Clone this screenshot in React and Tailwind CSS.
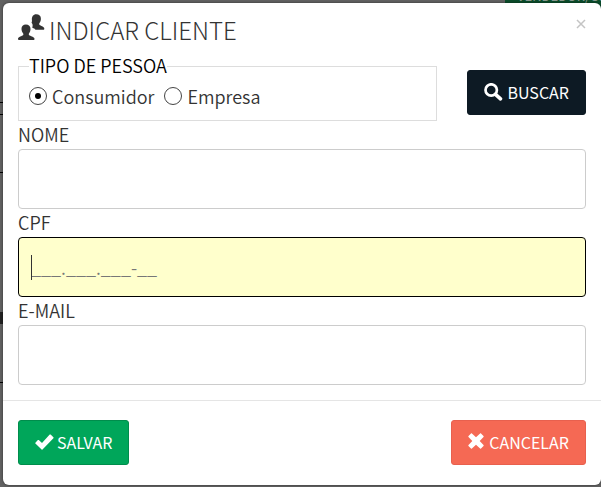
import { useState } from 'react';

function UsersIcon() {
  return (
    <svg width="27" height="27" viewBox="0 0 27 27" fill="currentColor" aria-hidden="true">
      <path d="M7.900 10.500c2.900 0 4.700 1.700 4.600 4.500 0 1.500-.4 3-1.400 4.200-.5.700-.4 1.500.1 2 .9.800 5.100 1.300 5.300 3.600.1.900-.3 1.200-1 1.200H1c-.8 0-1.100-.4-1-1.200.2-2.300 4.200-2.800 5-3.600.5-.5.500-1.300 0-2-1-1.200-1.500-2.700-1.500-4.200-.1-2.800 1.500-4.500 4.400-4.500z" />
      <path d="M18.200.3c2.900 0 4.800 1.700 4.700 4.500 0 1.500-.4 3-1.400 4.200-.5.700-.4 1.500.1 2 .9.800 4.500 1.300 4.700 3.500.1.900-.3 1.200-1 1.200h-7.800c-.5-.9-1.600-1.500-3.200-2 .9-3.200-.1-4.100-.8-4.900.4-.7.600-1.500.4-2.700-.3-3.600 1.400-5.800 4.300-5.800z" />
    </svg>
  );
}

function SearchIcon() {
  return (
    <svg width="19" height="18" viewBox="0 0 19 18" fill="none" stroke="currentColor" aria-hidden="true">
      <circle cx="7.200" cy="7" r="5.700" strokeWidth="2.700" />
      <path d="M11.500 11.300L16.500 15.800" strokeWidth="3.600" strokeLinecap="round" />
    </svg>
  );
}

function CheckIcon() {
  return (
    <svg width="19" height="16" viewBox="0 0 19 16" fill="currentColor" aria-hidden="true">
      <path d="M.4 8.700l2.500-2.600c.3-.3.600-.3.900 0l3.200 2.800L14.700.6c.3-.3.600-.3.900 0l2.800 2.700c.3.300.3.600 0 .9L7.500 15.400c-.3.300-.6.300-.9 0L.4 9.600c-.3-.3-.3-.6 0-.9z" />
    </svg>
  );
}

function CrossIcon() {
  return (
    <svg width="17" height="17" viewBox="0 0 17 17" fill="currentColor" aria-hidden="true">
      <path d="M3.900.500L8 4.300 12.100.5c.3-.3.600-.3.900 0l2.500 2.500c.3.300.3.600 0 .9L11.700 8l3.800 4.100c.3.300.3.600 0 .9L13 15.500c-.3.300-.6.300-.9 0L8 11.700l-4.100 3.800c-.3.300-.6.300-.9 0L.5 13c-.3-.3-.3-.6 0-.9L4.300 8 .5 3.900c-.3-.3-.3-.6 0-.9L3 .5c.3-.3.600-.3.900 0z" />
    </svg>
  );
}

function Backdrop() {
  return (
    <div className="absolute inset-0 overflow-hidden bg-[#626262]" aria-hidden="true">
      <div className="absolute left-0 top-[102px] h-px w-1 bg-black" />
      <div className="absolute left-0 top-[114px] h-px w-1 bg-black" />
      <div className="absolute left-0 top-[172px] h-px w-1 bg-black" />
      <div className="absolute left-0 top-[312px] h-3 w-1 bg-[#222]" />
      <div className="absolute left-0 top-[382px] h-px w-1 bg-black" />
      <div className="absolute -top-[14px] right-0 flex h-6 w-24 items-start whitespace-nowrap bg-[#0b4d2b] pl-3 text-[13px] font-normal leading-5 text-[#8a9a90]">
        VENDEDOR/CO
      </div>
    </div>
  );
}

const radioClass =
  "grid size-[18px] appearance-none place-content-center rounded-full border border-[#444] bg-white before:size-[6px] before:rounded-full checked:before:bg-black";
const fieldClass = "block h-[60px] w-full rounded border px-3 text-lg outline-none";
const buttonClass = "flex h-[45px] items-center rounded-[3px] border pb-[2px] px-4 text-base font-normal text-white";

function Field({ id, label, children }) {
  return (
    <div>
      <label htmlFor={id} className="block h-7 text-lg leading-[26px]">{label}</label>
      {children}
    </div>
  );
}

export default function App() {
  const [kind, setKind] = useState('consumidor');
  return (
    <div className="relative min-h-screen pb-px pl-[3px] pt-[3px] font-['Noto_Sans_CJK_SC','Source_Sans_Pro',sans-serif] font-[350] text-[#333]">
      <Backdrop />
      <form className="relative rounded-md bg-white shadow-[0_0_3px_rgba(0,0,0,0.5)]" role="dialog" aria-labelledby="title">
        <header className="flex h-[49px] items-start justify-between px-[15px] pt-[11px]">
          <h1 id="title" className="flex gap-1 text-2xl font-light leading-8">
            <UsersIcon />
            INDICAR CLIENTE
          </h1>
          <button type="button" aria-label="Fechar" className="flex size-5 items-center justify-end text-[#c4c4c4]">
            <svg width="10" height="10" viewBox="0 0 10 10" stroke="currentColor" strokeWidth="1.500" aria-hidden="true">
              <path d="M1 1l8 8M9 1L1 9" />
            </svg>
          </button>
        </header>

        <main className="border-b border-[#e5e5e5] px-[15px] pb-[15px]">
          <div className="flex items-end gap-[30px]">
            <fieldset className="min-w-0 flex-1 border border-[#ddd] px-[10px] pb-[11px]">
              <legend className="h-7 text-lg leading-[26px] text-black">TIPO DE PESSOA</legend>
              <div className="flex gap-[10px] pt-[3px] text-lg leading-[26px]">
                <label className="flex items-center gap-[5px]">
                  <input type="radio" name="kind" checked={kind === 'consumidor'} onChange={() => setKind('consumidor')} className={radioClass} />
                  Consumidor
                </label>
                <label className="flex items-center gap-[5px]">
                  <input type="radio" name="kind" checked={kind === 'empresa'} onChange={() => setKind('empresa')} className={radioClass} />
                  Empresa
                </label>
              </div>
            </fieldset>
            <div className="pb-[6px]">
              <button type="button" className={`${buttonClass} gap-1 border-[#0d1a24] bg-[#0d1a24]`}>
                <SearchIcon />
                BUSCAR
              </button>
            </div>
          </div>

          <Field id="nome" label="NOME">
            <input id="nome" type="text" className={`${fieldClass} border-[#ccc] bg-white`} />
          </Field>
          <Field id="cpf" label="CPF">
            <div className="relative">
              <input id="cpf" type="text" defaultValue="___.___.___-__" className={`${fieldClass} border-black bg-[#ffffcc] text-[#777]`} />
              <span className="absolute left-[13px] top-[18px] h-[25px] w-px bg-[#333]" aria-hidden="true" />
            </div>
          </Field>
          <Field id="email" label="E-MAIL">
            <input id="email" type="email" className={`${fieldClass} border-[#ccc] bg-white`} />
          </Field>
        </main>

        <footer className="flex items-center justify-between px-[15px] pb-5 pt-[19px]">
          <button type="submit" className={`${buttonClass} gap-[3px] border-[#008d4c] bg-[#00a65a]`}>
            <CheckIcon />
            SALVAR
          </button>
          <button type="button" className={`${buttonClass} gap-1 border-[#e8604e] bg-[#f56954]`}>
            <CrossIcon />
            CANCELAR
          </button>
        </footer>
      </form>
    </div>
  );
}
